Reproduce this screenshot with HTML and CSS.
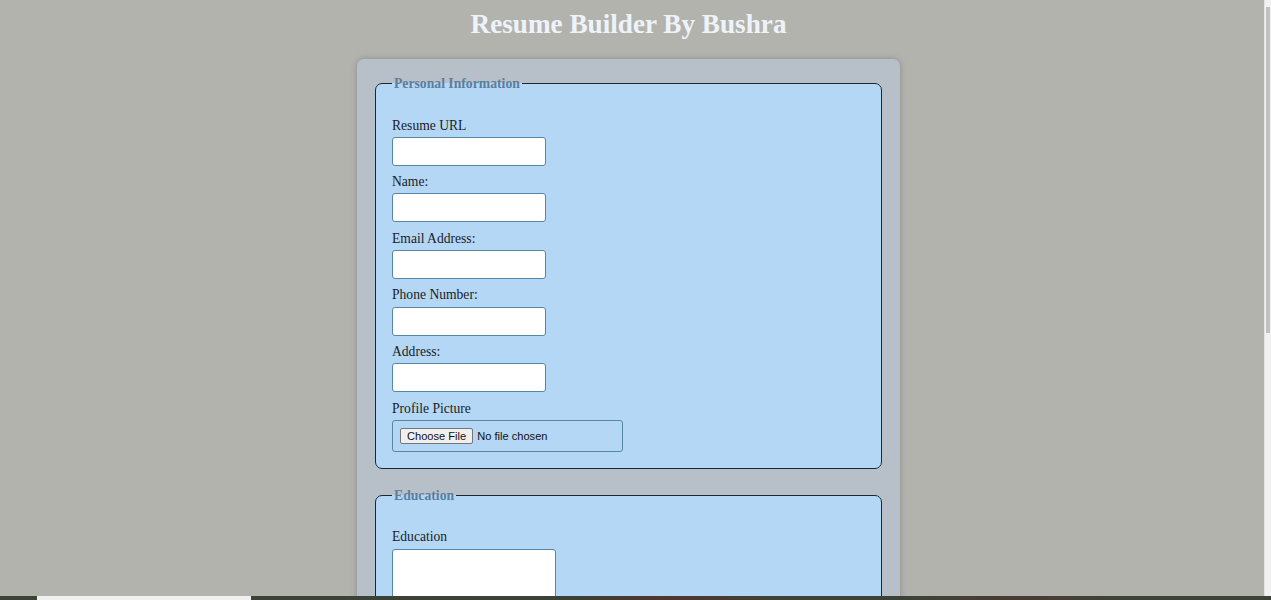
FILE: index.html
```html
<!DOCTYPE html>
<html lang="en">
<head>
<meta charset="utf-8">
<title>Resume Builder</title>
<link rel="stylesheet" href="styles.css">
</head>
<body>
<h1 class="title">Resume Builder By Bushra</h1>
<form class="container">
  <fieldset class="section">
    <legend class="section-legend">Personal Information</legend>
    <div class="field">
      <label class="field-label" for="url">Resume URL</label>
      <input class="text-input" id="url" type="text">
    </div>
    <div class="field">
      <label class="field-label" for="name">Name:</label>
      <input class="text-input" id="name" type="text">
    </div>
    <div class="field">
      <label class="field-label" for="email">Email Address:</label>
      <input class="text-input" id="email" type="email">
    </div>
    <div class="field">
      <label class="field-label" for="phone">Phone Number:</label>
      <input class="text-input" id="phone" type="tel">
    </div>
    <div class="field">
      <label class="field-label" for="address">Address:</label>
      <input class="text-input" id="address" type="text">
    </div>
    <div class="field field-last">
      <label class="field-label" for="pic">Profile Picture</label>
      <div class="file-box" id="pic">
        <span class="file-button">Choose File</span>
        <span class="file-text">No file chosen</span>
      </div>
    </div>
  </fieldset>
  <fieldset class="section">
    <legend class="section-legend">Education</legend>
    <div class="field">
      <label class="field-label" for="edu">Education</label>
      <textarea class="text-area" id="edu"></textarea>
    </div>
  </fieldset>
</form>
<div class="scrollbar"><div class="scrollbar-thumb"></div></div>
<div class="taskbar"><div class="taskbar-app"></div></div>
</body>
</html>
```

FILE: styles.css
```css
html, body {
  margin: 0;
  background: #b3b3ad;
}
body {
  padding: 9px 14px 0 0;
  font-family: "Liberation Serif", "Times New Roman", serif;
  font-size: 13.6px;
  color: #1c1c28;
}
.title {
  margin: 0 0 19px;
  text-align: center;
  font-size: 27.2px;
  font-weight: bold;
  line-height: 30.7px;
  color: #eef3fb;
}
.container {
  box-sizing: border-box;
  width: 543px;
  margin: 0 auto;
  padding: 17.5px 18px 40px 18px;
  background: #b7c0c8;
  border-radius: 7px;
  box-shadow: 0 0 6px rgba(0, 0, 0, 0.22);
}
.section {
  margin: 0 0 18.5px;
  padding: 26px 16px 16.5px;
  border: 1px solid #1b2733;
  border-radius: 7px;
  background: #b3d7f4;
  min-width: 0;
}
.section-legend {
  padding: 0 2px;
  font-weight: bold;
  font-size: 13.7px;
  line-height: 15.33px;
  color: #5d7d9d;
}
.field {
  display: flex;
  flex-direction: column;
  align-items: flex-start;
  margin-bottom: 8.3px;
}
.field-last {
  margin-bottom: 0;
}
.field-label {
  line-height: 15.33px;
  margin-bottom: 4px;
}
.text-input {
  box-sizing: border-box;
  width: 154px;
  height: 29px;
  margin: 0;
  border: 1px solid #5688a6;
  border-radius: 3px;
  background: #fff;
}
.file-box {
  box-sizing: border-box;
  width: 231px;
  height: 32px;
  padding: 0 7px;
  display: flex;
  align-items: center;
  border: 1px solid #5688a6;
  border-radius: 3px;
  font-family: "Liberation Sans", Arial, sans-serif;
  font-size: 11.1px;
  color: #111;
}
.file-button {
  box-sizing: border-box;
  height: 16.5px;
  padding: 0 6px;
  margin-right: 4px;
  display: flex;
  align-items: center;
  background: #efefef;
  border: 1px solid #767676;
  border-radius: 2px;
  color: #111;
}
.text-area {
  box-sizing: border-box;
  width: 164px;
  height: 70px;
  margin: 0;
  border: 1px solid #5688a6;
  border-radius: 3px;
  background: #fff;
  resize: none;
}
.scrollbar {
  position: fixed;
  top: 0;
  right: 0;
  width: 6px;
  height: 596px;
  background: #f1f1f1;
  border-left: 1px solid #e4e4e4;
}
.scrollbar-thumb {
  margin: 7px 1px 0 1px;
  height: 326px;
  background: #c1c1c1;
}
.taskbar {
  position: fixed;
  left: 0;
  right: 0;
  bottom: 0;
  height: 4px;
  background: linear-gradient(90deg, #3c4336 0%, #3b4135 45%, #52352f 52%, #3c4336 62%, #3c4336 72%, #4b3a32 80%, #3c4336 88%, #3c4336 100%);
}
.taskbar-app {
  margin-left: 37px;
  width: 214px;
  height: 4px;
  background: #f0f0f0;
}
```
